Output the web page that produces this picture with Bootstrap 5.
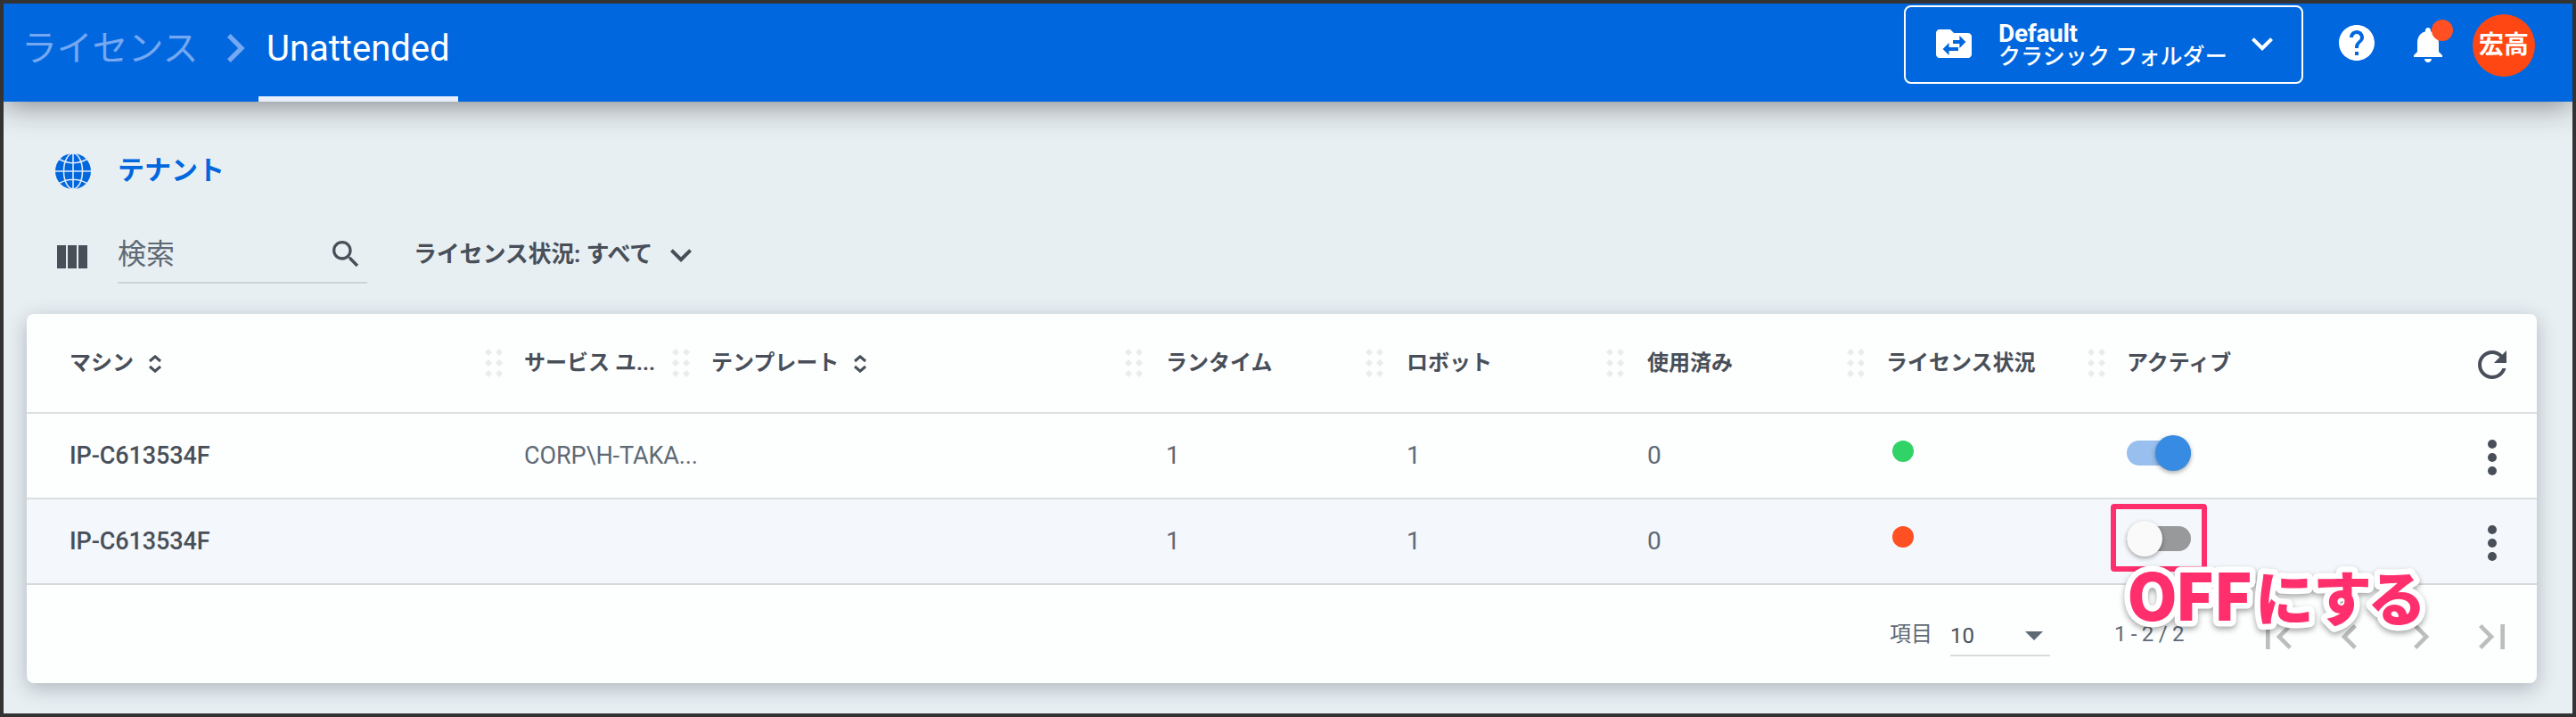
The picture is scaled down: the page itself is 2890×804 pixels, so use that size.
<!DOCTYPE html>
<html lang="ja">
<head>
<meta charset="utf-8">
<title>ライセンス - Unattended</title>
<link rel="stylesheet" href="https://cdn.jsdelivr.net/npm/bootstrap@5.3.0/dist/css/bootstrap.min.css">
<style>
  body { font-family: Roboto, "Noto Sans CJK JP", sans-serif; font-size: 28px; line-height: 1.2; color: #5f6a75; background: #e8eff3; }
  .frame { width: 2890px; height: 804px; border: 4px solid #333; background: #e8eff3; }
  svg { display: block; flex: none; }
  .topbar { height: 110px; background: #0067df; box-shadow: 0 4px 32px rgba(0,0,0,.45); padding: 0 42px 0 20px; z-index: 2; }
  .crumb { font-size: 40px; line-height: 48px; padding-top: 27px; }
  .crumb-parent { color: #75a8f0; width: 208px; letter-spacing: -.2px; }
  .crumb-sep { color: #75a8f0; margin-top: 18px; }
  .crumb-current { width: 224px; margin-left: -6px; border-bottom: 6px solid #e8eefc; height: 110px; color: #fff; padding-left: 9px; }
  .folder { width: 448px; height: 88px; margin-top: 2px; border: 2px solid #fff; border-radius: 8px; padding: 0 20px 0 30px; color: #fff; }
  .folder svg { margin-top: -2px; }
  .folder-text { margin-left: 26px; }
  .folder-name { font-size: 28px; line-height: 27px; font-weight: 700; letter-spacing: -.3px; }
  .folder-kind { font-size: 25px; line-height: 25px; letter-spacing: .1px; font-weight: 500; }
  .bell { margin: 22px 0 0 32px; }
  .dot-badge { width: 24px; height: 24px; background: #ff5023; top: -4px; left: 28px; }
  .avatar { width: 70px; height: 70px; margin: 12px 0 0 26px; background: #ff4713; color: #fff; font-size: 28px; font-weight: 700; line-height: 1; }
  .tenant { padding: 58px 0 0 58px; height: 140px; color: #0067df; gap: 30px; }
  .tenant-name { font-size: 30px; line-height: 38px; font-weight: 700; }
  .filters { height: 64px; padding-left: 60px; color: #484f59; }
  .searchbox { width: 280px; height: 64px; margin-left: 34px; border-bottom: 2px solid #cfd3d6; font-size: 32px; color: #5f6a75; padding-right: 4px; }
  .filter-label { margin-left: 52px; font-size: 26px; font-weight: 700; width: 276px; white-space: nowrap; letter-spacing: -.2px; }
  .panel { margin: 34px 40px 0 26px; height: 414px; background: #fdfefe; border-radius: 8px; box-shadow: 0 6px 22px rgba(30,40,50,.28); }
  .machines { table-layout: fixed; width: 2816px; border-collapse: separate; border-spacing: 0; color: #5f6a75; }
  .machines th, .machines td { height: 96px; padding: 0 0 0 44px; border-bottom: 2px solid #dcdfe0; white-space: nowrap; vertical-align: middle; line-height: 34px; font-size: 27px; letter-spacing: -.1px; }
  .machines td.num { padding-left: 46px; font-size: 28px; }
  .machines th { height: 112px; padding: 0; color: #484f59; font-size: 24px; font-weight: 700; letter-spacing: 0; }
  .machines th:first-child, .machines td:first-child { padding-left: 48px; }
  .machines td:first-child { color: #484f59; font-weight: 500; }
  .machines tr.alt td { background: #f4f7fb; border-color: #d5d9dc; }
  .handle { margin-right: 24px; }
  .num .handle { margin-right: 26px; }
  .sorter { margin: 2px 0 0 16px; }
  .state { width: 24px; height: 24px; margin: -10px 0 0 7px; }
  .toggle { width: 72px; height: 28px; border-radius: 14px; margin-top: -6px; }
  .knob { width: 40px; height: 40px; box-shadow: 0 2px 5px rgba(0,0,0,.35); top: -6px; }
  .toggle.on { background: #98bfee; } .toggle.on .knob { background: #388be2; right: 0; }
  .toggle.off { background: #98999b; } .toggle.off .knob { background: #fafafa; left: 0; }
  .marker { width: 108px; height: 76px; border: 6px solid #ff2f6e; border-radius: 4px; left: -18px; top: -25px; }
  .note { left: -18px; top: 4px; z-index: 3; letter-spacing: 0; }
  .machines .act { padding: 0; }
  .pager { height: 110px; font-size: 24px; line-height: 34px; padding-right: 22px; }
  .pagesize { width: 112px; height: 44px; border-bottom: 2px solid #dadcde; margin: 5px 72px 0 20px; color: #484f59; padding: 0 8px 0 0; }
  .range { width: 156px; letter-spacing: -.3px; }
  .pages { color: #bcbdbe; gap: 24px; margin-top: 5px; }
</style>
</head>
<body>
<svg width="0" height="0" class="position-absolute">
  <defs>
    <symbol id="down" viewBox="0 0 24 24"><path fill="currentColor" d="M16.59 8.59L12 13.17 7.41 8.59 6 10l6 6 6-6z"/></symbol>
    <symbol id="right" viewBox="0 0 24 24"><path fill="currentColor" d="M10 6L8.59 7.41 13.17 12l-4.58 4.59L10 18l6-6z"/></symbol>
    <symbol id="grip" viewBox="0 0 20 32"><path fill="#e9ebec" d="M4 0l4 4-4 4-4-4zM16 0l4 4-4 4-4-4zM4 12l4 4-4 4-4-4zM16 12l4 4-4 4-4-4zM4 24l4 4-4 4-4-4zM16 24l4 4-4 4-4-4z"/></symbol>
    <symbol id="sort" viewBox="0 0 16 20"><path fill="none" stroke="currentColor" stroke-width="3" d="M2 7l6-5.2L14 7M2 13l6 5.2L14 13"/></symbol>
    <symbol id="kebab" viewBox="0 0 12 40"><g fill="#484f59"><circle cx="6" cy="5" r="5"/><circle cx="6" cy="20" r="5"/><circle cx="6" cy="35" r="5"/></g></symbol>
  </defs>
</svg>
<div class="frame overflow-hidden">
  <header class="topbar d-flex align-items-start position-relative">
    <div class="crumb crumb-parent">ライセンス</div>
    <svg class="crumb-sep" width="64" height="64"><use href="#right"/></svg>
    <div class="crumb crumb-current">Unattended</div>
    <div class="folder d-flex align-items-center ms-auto">
      <svg width="48" height="48" viewBox="0 0 24 24"><path fill="#fff" d="M20 6h-8l-2-2H4c-1.1 0-2 .9-2 2v12c0 1.1.9 2 2 2h16c1.1 0 2-.9 2-2V8c0-1.1-.9-2-2-2z"/><path fill="#0067df" d="M11.5 10h3.7V7.5l3.5 3.5-3.5 3.5V12h-3.7zM14.5 16H9.3v2.5L5.8 15l3.5-3.5V14h5.2z"/></svg>
      <div class="folder-text flex-grow-1 text-nowrap">
        <div class="folder-name">Default</div>
        <div class="folder-kind">クラシック フォルダー</div>
      </div>
      <svg width="48" height="48"><use href="#down"/></svg>
    </div>
    <svg style="margin:20px 0 0 36px" width="48" height="48" viewBox="0 0 24 24"><path fill="#fff" d="M12 2C6.48 2 2 6.48 2 12s4.48 10 10 10 10-4.48 10-10S17.52 2 12 2zm1 17h-2v-2h2v2zm2.07-7.75l-.9.92C13.45 12.9 13 13.5 13 15h-2v-.5c0-1.1.45-2.1 1.17-2.83l1.24-1.26c.37-.36.59-.86.59-1.41 0-1.1-.9-2-2-2s-2 .9-2 2H8c0-2.21 1.79-4 4-4s4 1.79 4 4c0 .88-.36 1.68-.93 2.25z"/></svg>
    <div class="bell position-relative">
      <svg width="48" height="48" viewBox="0 0 24 24"><path fill="#fff" d="M12 22c1.1 0 2-.9 2-2h-4c0 1.1.89 2 2 2zm6-6v-5c0-3.07-1.64-5.64-4.5-6.32V4c0-.83-.67-1.5-1.5-1.5s-1.5.67-1.5 1.5v.68C7.63 5.36 6 7.92 6 11v5l-2 2v1h16v-1l-2-2z"/></svg>
      <span class="dot-badge position-absolute rounded-circle"></span>
    </div>
    <div class="avatar rounded-circle d-flex align-items-center justify-content-center">宏高</div>
  </header>

  <div class="tenant d-flex align-items-start">
    <svg width="40" height="40" viewBox="0 0 40 40"><circle cx="20" cy="20" r="20" fill="#0067df"/><g fill="none" stroke="#dfeaf6" stroke-width="1.6"><path d="M20 0v40M0 20h40M4.500 6.500Q20 15 35.500 6.500M4.500 33.500Q20 25 35.500 33.500"/><ellipse cx="20" cy="20" rx="10.500" ry="20"/></g></svg>
    <div class="tenant-name">テナント</div>
  </div>

  <div class="filters d-flex align-items-center">
    <svg class="mt-1" width="34" height="26" viewBox="0 0 34 26"><path fill="#484f59" d="M0 0h10v26H0zM12 0h10v26H12zM24 0h10v26H24z"/></svg>
    <div class="searchbox d-flex align-items-center justify-content-between">
      <span>検索</span>
      <svg width="40" height="40" viewBox="0 0 24 24"><path fill="#484f59" d="M15.500 14h-.79l-.28-.27C15.410 12.590 16 11.110 16 9.500 16 5.910 13.090 3 9.500 3S3 5.910 3 9.500 5.910 16 9.500 16c1.610 0 3.090-.59 4.230-1.570l.27.28v.79l5 4.990L20.490 19l-4.990-5zm-6 0C7.010 14 5 11.990 5 9.500S7.010 5 9.500 5 14 7.010 14 9.500 11.990 14 9.500 14z"/></svg>
    </div>
    <div class="filter-label">ライセンス状況: すべて</div>
    <svg width="48" height="48"><use href="#down"/></svg>
  </div>

  <main class="panel">
    <table class="machines">
      <colgroup><col style="width:514px"><col style="width:210px"><col style="width:508px"><col style="width:270px"><col style="width:270px"><col style="width:270px"><col style="width:270px"><col style="width:404px"><col style="width:100px"></colgroup>
      <thead>
        <tr>
          <th><div class="d-flex align-items-center">マシン<svg class="sorter" width="16" height="20"><use href="#sort"/></svg></div></th>
          <th><div class="d-flex align-items-center"><svg class="handle" width="20" height="32"><use href="#grip"/></svg>サービス ユ...</div></th>
          <th><div class="d-flex align-items-center"><svg class="handle" width="20" height="32"><use href="#grip"/></svg>テンプレート<svg class="sorter" width="16" height="20"><use href="#sort"/></svg></div></th>
          <th class="num"><div class="d-flex align-items-center"><svg class="handle" width="20" height="32"><use href="#grip"/></svg>ランタイム</div></th>
          <th class="num"><div class="d-flex align-items-center"><svg class="handle" width="20" height="32"><use href="#grip"/></svg>ロボット</div></th>
          <th class="num"><div class="d-flex align-items-center"><svg class="handle" width="20" height="32"><use href="#grip"/></svg>使用済み</div></th>
          <th><div class="d-flex align-items-center"><svg class="handle" width="20" height="32"><use href="#grip"/></svg>ライセンス状況</div></th>
          <th><div class="d-flex align-items-center"><svg class="handle" width="20" height="32"><use href="#grip"/></svg>アクティブ</div></th>
          <th class="act"><svg class="mx-auto mt-1" width="48" height="48" viewBox="0 0 24 24"><path fill="#484f59" d="M17.650 6.350C16.200 4.900 14.210 4 12 4c-4.420 0-7.990 3.580-7.990 8s3.570 8 7.990 8c3.730 0 6.840-2.550 7.730-6h-2.080c-.82 2.330-3.040 4-5.650 4-3.310 0-6-2.690-6-6s2.690-6 6-6c1.660 0 3.140.69 4.220 1.780L13 11h7V4l-2.350 2.350z"/></svg></th>
        </tr>
      </thead>
      <tbody>
        <tr>
          <td>IP-C613534F</td><td>CORP\H-TAKA...</td><td></td><td class="num">1</td><td class="num">1</td><td class="num">0</td>
          <td><div class="state rounded-circle" style="background:#32d366"></div></td>
          <td><div class="toggle on position-relative"><span class="knob position-absolute rounded-circle"></span></div></td>
          <td class="act"><svg class="mx-auto mt-1" width="12" height="40"><use href="#kebab"/></svg></td>
        </tr>
        <tr class="alt">
          <td>IP-C613534F</td><td></td><td></td><td class="num">1</td><td class="num">1</td><td class="num">0</td>
          <td><div class="state rounded-circle" style="background:#ff5023"></div></td>
          <td><div class="toggle off position-relative"><span class="knob position-absolute rounded-circle"></span><span class="marker position-absolute"></span>
            <svg class="note position-absolute" width="390" height="140" viewBox="0 0 390 140" font-family="'Noto Sans CJK JP',sans-serif" font-weight="900">
              <g fill="#ff2f6e" stroke="#fff" stroke-width="13" stroke-linejoin="round" paint-order="stroke" style="filter:drop-shadow(0 3px 3px rgba(0,0,0,.35))">
                <text y="102"><tspan x="18 72 115" font-size="73">OFF</tspan><tspan x="162 227 288" font-size="66">にする</tspan></text>
              </g>
            </svg></div></td>
          <td class="act"><svg class="mx-auto mt-1" width="12" height="40"><use href="#kebab"/></svg></td>
        </tr>
      </tbody>
    </table>
    <div class="pager d-flex align-items-center justify-content-end">
      <span>項目</span>
      <div class="pagesize d-flex align-items-center justify-content-between">10<svg width="20" height="10" viewBox="0 0 20 10"><path fill="#5f6a75" d="M0 0h20L10 10z"/></svg></div>
      <span class="range">1 - 2 / 2</span>
      <div class="pages d-flex">
        <svg width="56" height="56" viewBox="0 0 24 24"><path fill="currentColor" d="M18.410 16.590L13.820 12l4.590-4.590L17 6l-6 6 6 6zM6 6h2v12H6z"/></svg>
        <svg width="56" height="56" viewBox="0 0 24 24"><path fill="currentColor" d="M15.410 7.410L14 6l-6 6 6 6 1.410-1.410L10.830 12z"/></svg>
        <svg width="56" height="56"><use href="#right"/></svg>
        <svg width="56" height="56" viewBox="0 0 24 24"><path fill="currentColor" d="M5.590 7.410L10.180 12l-4.590 4.590L7 18l6-6-6-6zM16 6h2v12h-2z"/></svg>
      </div>
    </div>
  </main>
</div>
<script src="https://cdn.jsdelivr.net/npm/bootstrap@5.3.0/dist/js/bootstrap.bundle.min.js"></script>
</body>
</html>
